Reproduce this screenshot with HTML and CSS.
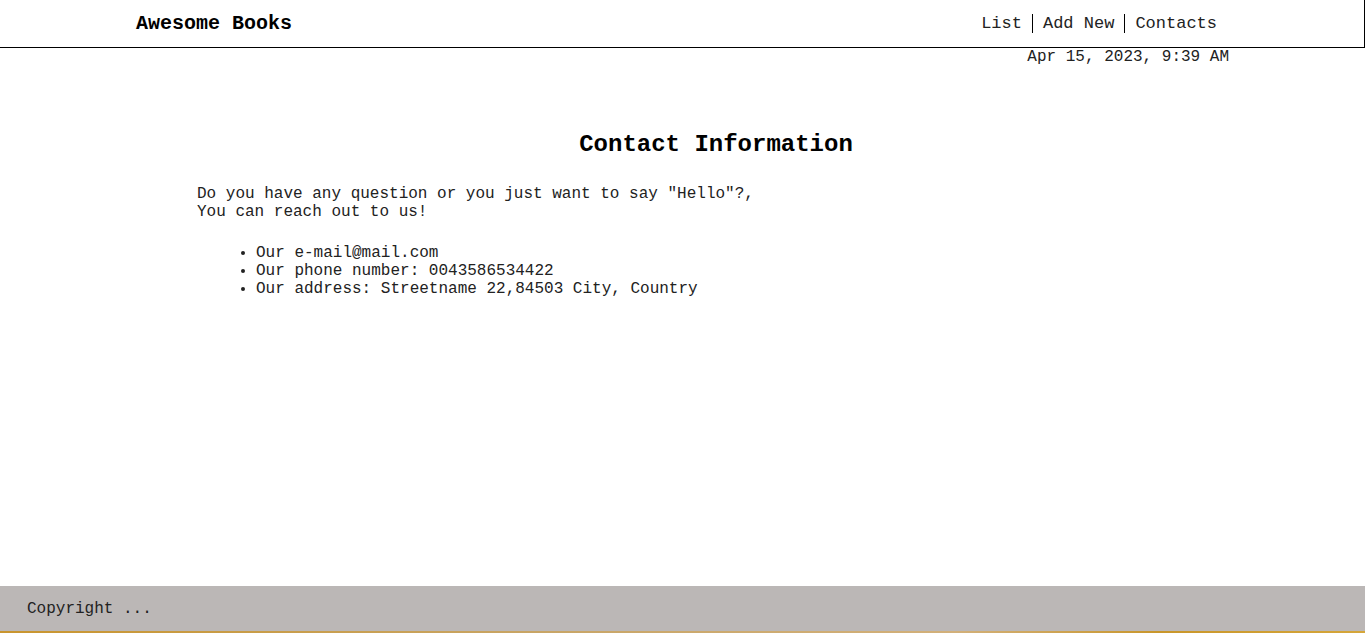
FILE: index.html
```html
<!DOCTYPE html>
<html lang="en">
<head>
<meta charset="utf-8">
<title>Awesome Books</title>
<link rel="stylesheet" href="styles.css">
</head>
<body>
<div class="page">
  <header class="navbar">
    <h1 class="logo">Awesome Books</h1>
    <nav class="nav">
      <a class="nav-link" href="#">List</a>
      <a class="nav-link sep" href="#">Add New</a>
      <a class="nav-link sep" href="#">Contacts</a>
    </nav>
  </header>
  <div class="date">Apr 15, 2023, 9:39 AM</div>
  <main class="contact">
    <h2 class="contact-title">Contact Information</h2>
    <p class="contact-text">Do you have any question or you just want to say "Hello"?,<br>You can reach out to us!</p>
    <ul class="contact-list">
      <li>Our e-mail@mail.com</li>
      <li>Our phone number: 0043586534422</li>
      <li>Our address: Streetname 22,84503 City, Country</li>
    </ul>
  </main>
  <footer class="footer">Copyright ...</footer>
  <div class="strip"></div>
</div>
</body>
</html>
```
FILE: styles.css
```css
html, body {
  margin: 0;
  padding: 0;
  background: #fff;
}

body {
  font-family: "Liberation Mono", "Courier New", monospace;
  color: #111;
  font-size: 16px;
}

.page {
  min-height: 100vh;
  display: flex;
  flex-direction: column;
}

.navbar {
  display: flex;
  justify-content: space-between;
  align-items: center;
  height: 47px;
  padding: 0 147px 0 136px;
  border-right: 1px solid #000;
  border-bottom: 1px solid #000;
  box-sizing: content-box;
  width: calc(100% - 284px);
}

.logo {
  margin: 0;
  font-size: 20px;
  font-weight: bold;
  color: #000;
}

.nav {
  display: flex;
  align-items: center;
}

.nav-link {
  font-size: 17px;
  color: #222;
  text-decoration: none;
  padding: 0 10px;
  line-height: 19px;
}

.nav-link:last-child {
  padding-right: 0;
}

.sep {
  border-left: 1px solid #000;
}

.date {
  text-align: right;
  padding-right: 136px;
  line-height: 18px;
  height: 18px;
  color: #222;
}

.contact {
  flex: 1;
  padding: 0 130px 0 197px;
}

.contact-title {
  margin: 65px 0 0;
  text-align: center;
  font-size: 24px;
  font-weight: bold;
  color: #000;
}

.contact-text {
  margin: 27px 0 0;
  line-height: 18px;
  color: #222;
}

.contact-list {
  margin: 23px 0 0;
  padding-left: 59px;
  line-height: 18px;
  color: #222;
}

.footer {
  background: #bbb7b6;
  height: 45px;
  padding-left: 27px;
  display: flex;
  align-items: center;
  color: #222;
}

.strip {
  height: 2px;
  background: linear-gradient(90deg, #c9952e, #c8a566 40%, #d2b07a 70%, #c9962a 85%, #d5a63a);
}
```
